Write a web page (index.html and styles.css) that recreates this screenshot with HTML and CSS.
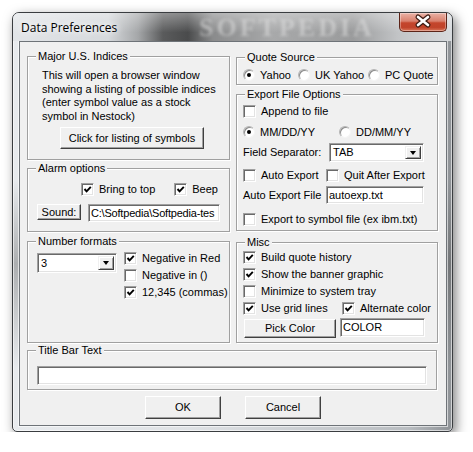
FILE: index.html
```
<!DOCTYPE html>
<html lang="en">
<head>
	<meta charset="utf-8">
	<title>Data Preferences</title>
	<link rel="stylesheet" href="styles.css">
</head>
<body>

<div class="window">
	<div class="titlebar">
		<span class="title">Data Preferences</span>
		<span class="watermark">SOFTPEDIA</span>
		<span class="close">
			<svg width="48" height="19" viewBox="0 0 48 19">
				<path d="M19 5 L29 13 M29 5 L19 13" stroke="#3b1a12" stroke-width="5" stroke-linecap="round"/>
				<path d="M19 5 L29 13 M29 5 L19 13" stroke="#fff" stroke-width="2.6" stroke-linecap="round"/>
			</svg>
		</span>
	</div>

	<div class="client">
		<div class="columns">
			<div class="col">
				<div class="group major">
					<div class="legend">Major U.S. Indices</div>
					<p class="note">This will open a browser window<br>showing a listing of possible indices<br>(enter symbol value as a stock<br>symbol in Nestock)</p>
					<span class="btn btn-symbols">Click for listing of symbols</span>
				</div>

				<div class="group alarm">
					<div class="legend">Alarm options</div>
					<div class="row alarm-checks">
						<span class="item"><span class="cb on"><svg viewBox="0 0 11 11"><path d="M2.5 5 L4.6 7.4 L8.8 2.8"/></svg></span>Bring to top</span>
						<span class="item beep"><span class="cb on"><svg viewBox="0 0 11 11"><path d="M2.5 5 L4.6 7.4 L8.8 2.8"/></svg></span>Beep</span>
					</div>
					<div class="row sound-row">
						<span class="btn btn-sound">Sound:</span>
						<span class="field field-sound">C:\Softpedia\Softpedia-tes</span>
					</div>
				</div>

				<div class="group numbers">
					<div class="legend">Number formats</div>
					<div class="row numbers-row">
						<span class="select select-digits"><span class="val">3</span><span class="drop"></span></span>
						<div class="stack">
							<span class="item"><span class="cb on"><svg viewBox="0 0 11 11"><path d="M2.5 5 L4.6 7.4 L8.8 2.8"/></svg></span>Negative in Red</span>
							<span class="item"><span class="cb"></span>Negative in ()</span>
							<span class="item"><span class="cb on"><svg viewBox="0 0 11 11"><path d="M2.5 5 L4.6 7.4 L8.8 2.8"/></svg></span>12,345 (commas)</span>
						</div>
					</div>
				</div>
			</div>

			<div class="col">
				<div class="group quote">
					<div class="legend">Quote Source</div>
					<div class="row quote-row">
						<span class="item w-yahoo"><span class="rb on"></span>Yahoo</span>
						<span class="item w-uk"><span class="rb"></span>UK Yahoo</span>
						<span class="item"><span class="rb"></span>PC Quote</span>
					</div>
				</div>

				<div class="group export">
					<div class="legend">Export File Options</div>
					<div class="row append-row">
						<span class="item"><span class="cb"></span>Append to file</span>
					</div>
					<div class="row date-row">
						<span class="item w-date"><span class="rb on"></span>MM/DD/YY</span>
						<span class="item"><span class="rb"></span>DD/MM/YY</span>
					</div>
					<div class="row sep-row">
						<span class="label w-sep">Field Separator:</span>
						<span class="select select-sep"><span class="val">TAB</span><span class="drop"></span></span>
					</div>
					<div class="row auto-row">
						<span class="item w-auto"><span class="cb"></span>Auto Export</span>
						<span class="item"><span class="cb"></span>Quit After Export</span>
					</div>
					<div class="row file-row">
						<span class="label w-auto">Auto Export File</span>
						<span class="field field-file">autoexp.txt</span>
					</div>
					<div class="row symbol-row">
						<span class="item"><span class="cb"></span>Export to symbol file (ex ibm.txt)</span>
					</div>
				</div>

				<div class="group misc">
					<div class="legend">Misc</div>
					<div class="stack misc-stack">
						<span class="item"><span class="cb on"><svg viewBox="0 0 11 11"><path d="M2.5 5 L4.6 7.4 L8.8 2.8"/></svg></span>Build quote history</span>
						<span class="item"><span class="cb on"><svg viewBox="0 0 11 11"><path d="M2.5 5 L4.6 7.4 L8.8 2.8"/></svg></span>Show the banner graphic</span>
						<span class="item"><span class="cb"></span>Minimize to system tray</span>
						<div class="row">
							<span class="item w-grid"><span class="cb on"><svg viewBox="0 0 11 11"><path d="M2.5 5 L4.6 7.4 L8.8 2.8"/></svg></span>Use grid lines</span>
							<span class="item"><span class="cb on"><svg viewBox="0 0 11 11"><path d="M2.5 5 L4.6 7.4 L8.8 2.8"/></svg></span>Alternate color</span>
						</div>
					</div>
					<div class="row color-row">
						<span class="btn btn-color">Pick Color</span>
						<span class="field field-color">COLOR</span>
					</div>
				</div>
			</div>
		</div>

		<div class="group titletext">
			<div class="legend">Title Bar Text</div>
			<span class="field field-title"></span>
		</div>

		<div class="actions">
			<span class="btn btn-dialog">OK</span>
			<span class="btn btn-dialog">Cancel</span>
		</div>
	</div>
</div>

</body>
</html>
```

FILE: styles.css
```
body {
	margin: 0;
	background: #fff;
	color: #000;
	font-size: 11px;
	line-height: 13px;
	font-family: "Liberation Sans", Arial, sans-serif;
}

/* window frame */

.window {
	box-sizing: border-box;
	width: 441px;
	height: 420px;
	margin: 12px 0 0 12px;
	padding: 0 5px 5px 6px;
	border: 1px solid #3a3d40;
	border-radius: 7px 7px 5px 5px;
	background:
		linear-gradient(180deg, rgba(255, 255, 255, 0) 40%, rgba(60, 60, 60, 0.35) 60%, rgba(255, 255, 255, 0) 85%),
		linear-gradient(90deg, #e8ebee 0, #dfe2e5 40%, #b9bdc1 90%, #8e9296 100%);
	box-shadow: inset 0 0 0 1px rgba(255, 255, 255, 0.6), 3px 4px 12px rgba(0, 0, 0, 0.5);
}

.titlebar {
	position: relative;
	display: flex;
	justify-content: space-between;
	align-items: flex-start;
	height: 28px;
	margin: 0 -5px 0 -6px;
	padding: 0 5px 0 8px;
	border-radius: 6px 6px 0 0;
	background:
		linear-gradient(180deg, rgba(255, 255, 255, 0.35), rgba(255, 255, 255, 0) 70%),
		linear-gradient(90deg, #e2e5e8 0, #d6d9dc 95px, #a5a7a9 125px, #5a5b5c 150px, #4a4b4c 175px, #8a8b8c 200px, #a8a9aa 260px, #9a9b9c 340px, #c2c4c6 385px, #d8dbde 441px);
}

.title {
	margin-top: 7px;
	font-size: 12px;
	line-height: 15px;
	font-family: "Open Sans", "Noto Sans", sans-serif;
	text-shadow: 0 0 6px #fff, 0 0 10px #fff;
}

.watermark {
	position: absolute;
	left: 186px;
	top: 2px;
	font: bold 26px/26px "Liberation Serif", serif;
	letter-spacing: 3px;
	color: rgba(228, 228, 228, 0.5);
	filter: blur(1.4px);
}

.close {
	position: relative;
	width: 48px;
	height: 19px;
	box-sizing: border-box;
	border: 1px solid #5c2418;
	border-top: 0;
	border-radius: 0 0 5px 5px;
	background: linear-gradient(180deg, #eab2a6 0, #d9816e 45%, #c4452c 55%, #c0432a 80%, #d9765a 100%);
	box-shadow: inset 0 0 0 1px rgba(255, 255, 255, 0.35);
}

.close svg {
	display: block;
	margin: -1px 0 0 -1px;
}

.client {
	box-sizing: border-box;
	height: 385px;
	padding: 14px 0 0 7px;
	border: 1px solid #6e7378;
	background: #f0f0f0;
	box-shadow: 0 0 0 1px rgba(255, 255, 255, 0.6);
}

.columns {
	display: grid;
	grid-template-columns: 203px 202px;
	column-gap: 6px;
}

.col {
	display: flex;
	flex-direction: column;
}

/* group boxes */

.group {
	box-sizing: border-box;
	border: 1px solid #a0a0a0;
	box-shadow: inset 1px 1px #fff, 1px 1px #fff;
}

.legend {
	display: table;
	height: 13px;
	margin: -7px 0 0 8px;
	padding: 0 2px;
	background: #f0f0f0;
	white-space: nowrap;
}

.major { height: 104px; }
.alarm { height: 64px; margin-top: 8px; }
.numbers { height: 102px; margin-top: 9px; }
.quote { height: 28px; margin-top: 1px; }
.export { height: 137px; margin-top: 9px; }
.misc { height: 101px; margin-top: 11px; }

.titletext {
	width: 410px;
	height: 40px;
	margin-top: 7px;
}

/* controls */

.row {
	display: flex;
	align-items: center;
	white-space: nowrap;
}

.stack {
	display: flex;
	flex-direction: column;
	gap: 4px;
}

.item {
	display: flex;
	align-items: center;
	gap: 5px;
	height: 13px;
	white-space: nowrap;
}

.label {
	white-space: nowrap;
}

.cb,
.rb {
	flex: none;
	box-sizing: border-box;
	width: 13px;
	height: 13px;
	border: 1px solid;
	border-color: #a0a0a0 #fff #fff #a0a0a0;
	background: #fff;
	box-shadow: inset 1px 1px #696969, inset -1px -1px #e3e3e3;
}

.cb svg {
	display: block;
	width: 11px;
	height: 11px;
	fill: none;
	stroke: #000;
	stroke-width: 1.9;
}

.rb {
	position: relative;
	width: 12px;
	height: 12px;
	border-radius: 50%;
	border-color: #b4b4b4 #f4f4f4 #f4f4f4 #b4b4b4;
	box-shadow: inset 1px 1px #8c8c8c;
}

.rb.on::after {
	content: "";
	position: absolute;
	left: 3px;
	top: 3px;
	width: 4px;
	height: 4px;
	border-radius: 50%;
	background: #000;
}

.btn {
	display: flex;
	align-items: center;
	justify-content: center;
	box-sizing: border-box;
	border: 1px solid;
	border-color: #fff #404040 #404040 #fff;
	background: #f0f0f0;
	box-shadow: inset -1px -1px #a0a0a0;
	white-space: nowrap;
}

.field {
	display: block;
	box-sizing: border-box;
	padding: 2px 0 0 2px;
	border: 1px solid;
	border-color: #a0a0a0 #fff #fff #a0a0a0;
	background: #fff;
	box-shadow: inset 1px 1px #696969, inset -1px -1px #e3e3e3;
	white-space: nowrap;
	overflow: hidden;
}

.select {
	display: flex;
	align-items: center;
	justify-content: space-between;
	box-sizing: border-box;
	padding: 2px;
	border: 1px solid;
	border-color: #a0a0a0 #fff #fff #a0a0a0;
	background: #fff;
	box-shadow: inset 1px 1px #696969, inset -1px -1px #e3e3e3;
}

.select .val {
	padding-left: 1px;
}

.drop {
	display: flex;
	align-items: center;
	justify-content: center;
	box-sizing: border-box;
	width: 16px;
	height: 100%;
	border: 1px solid;
	border-color: #f0f0f0 #404040 #404040 #f0f0f0;
	background: #f0f0f0;
	box-shadow: inset 1px 1px #fff, inset -1px -1px #a0a0a0;
}

.drop::after {
	content: "";
	border-top: 4px solid #000;
	border-left: 3.5px solid transparent;
	border-right: 3.5px solid transparent;
}

/* Major U.S. Indices */

.note {
	margin: 6px 0 0 14px;
	line-height: 13.5px;
	white-space: nowrap;
}

.btn-symbols {
	width: 144px;
	height: 22px;
	margin: 4px 0 0 32px;
}

/* Alarm */

.alarm-checks {
	margin: 8px 0 0 53px;
}

.beep {
	margin-left: 19px;
}

.sound-row {
	align-items: flex-start;
	margin: 8px 0 0 9px;
}

.btn-sound {
	width: 44px;
	height: 16px;
}

.field-sound {
	width: 132px;
	height: 18px;
	margin-left: 7px;
	letter-spacing: -0.2px;
}

/* Number formats */

.numbers-row {
	align-items: flex-start;
	margin-top: 4px;
}

.select-digits {
	width: 80px;
	height: 20px;
	margin: 1px 0 0 9px;
}

.numbers-row .stack {
	margin-left: 7px;
}

/* Quote source */

.quote-row {
	margin: 5px 0 0 6px;
}

.quote-row .item,
.date-row .item {
	height: 12px;
}

.w-yahoo { width: 55px; }
.w-uk { width: 70px; }

/* Export */

.export .row {
	margin-left: 6px;
}

.append-row { margin-top: 4px; }
.date-row { margin-top: 8px; }
.sep-row { margin-top: 5px; }
.auto-row { margin-top: 7px; }
.file-row { margin-top: 4px; }
.symbol-row { margin-top: 9px; }

.w-date { width: 96px; }
.w-sep { width: 86px; }
.w-auto { width: 83px; }

.select-sep {
	width: 95px;
	height: 19px;
}

.field-file {
	width: 98px;
	height: 18px;
}

/* Misc */

.misc-stack {
	margin: 2px 0 0 6px;
}

.w-grid { width: 99px; }

.color-row {
	align-items: flex-start;
	margin: 3px 0 0 7px;
}

.btn-color {
	width: 92px;
	height: 19px;
	margin-top: 1px;
}

.field-color {
	width: 85px;
	height: 19px;
	margin-left: 4px;
}

/* Title bar text and dialog buttons */

.field-title {
	width: 390px;
	height: 19px;
	margin: 9px 0 0 9px;
}

.actions {
	display: flex;
	justify-content: center;
	gap: 24px;
	margin: 6px 0 0 -7px;
}

.btn-dialog {
	width: 76px;
	height: 23px;
}
```
